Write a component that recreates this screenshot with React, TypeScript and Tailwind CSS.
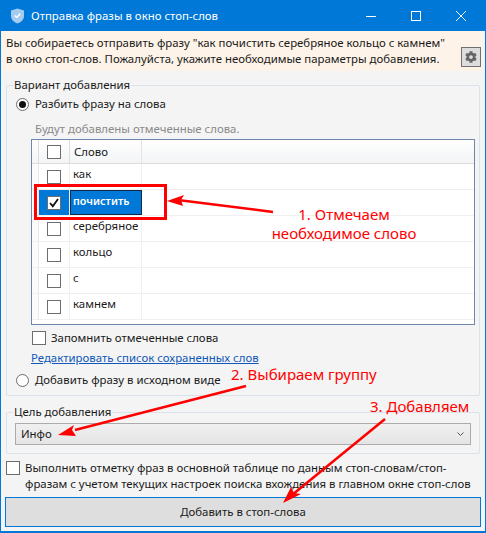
import { FaCog } from "react-icons/fa";

const WORDS = ["как", "почистить", "серебряное", "кольцо", "с", "камнем"];

function Check({ checked = false }: { checked?: boolean }) {
  return (
    <span className="flex h-[14px] w-[14px] shrink-0 items-center justify-center border border-[#6d6d6d] bg-white">
      {checked && (
        <svg width="12" height="12" viewBox="0 0 12 12">
          <path d="M2 6 L4.8 9.2 L10 2" fill="none" stroke="#111" strokeWidth="1.8" />
        </svg>
      )}
    </span>
  );
}

function Radio({ checked = false }: { checked?: boolean }) {
  return (
    <span className="flex h-[13px] w-[13px] shrink-0 items-center justify-center rounded-full border border-[#6d6d6d] bg-white">
      {checked && <span className="h-[7px] w-[7px] rounded-full bg-[#111]" />}
    </span>
  );
}

function Row({ word }: { word: string }) {
  const active = word === "почистить";
  return (
    <div className="flex h-[26px] border-b border-[#f0f0f0]">
      <div className="w-[7px] border-r border-[#e8e8e8] bg-[#fbfbfb]" />
      <div className={`flex w-[31px] items-center justify-center border-r border-[#f0f0f0] ${active ? "bg-[#0078d7]" : ""}`}>
        <Check checked={active} />
      </div>
      {active ? (
        <div className="flex w-[72px] items-center border border-[#10284a] bg-[#0078d7] pb-[4px] pl-[2px] text-[10.8px] font-semibold text-white">
          {word}
        </div>
      ) : (
        <div className="flex w-[72px] items-center border-r border-[#f0f0f0] pb-[5px] pl-[3px]">{word}</div>
      )}
    </div>
  );
}

export default function App() {
  return (
    <div className="relative flex h-[533px] w-[486px] flex-col border border-b-2 border-[#0078d7] bg-[#f4f4f4] font-['Noto_Sans',sans-serif] text-[11.4px] leading-[16px] text-[#1a1a1a]">
      {/* title bar */}
      <div className="flex h-[30px] shrink-0 items-center bg-[#0078d7] pl-[9px] text-white">
        <svg width="15" height="16" viewBox="0 0 15 16">
          <path d="M7.5 0.5 L14 2.5 V8 C14 12 10.5 14.5 7.5 15.5 C4.5 14.5 1 12 1 8 V2.5 Z" fill="#a4cbf0" />
          <path d="M4.8 7.5 L6.8 9.5 L10.2 5.8" fill="none" stroke="#fff" strokeWidth="1.5" />
        </svg>
        <span className="ml-[6px]">Отправка фразы в окно стоп-слов</span>
        <div className="ml-auto flex items-center gap-[35px] pr-[19px]">
          <svg width="10" height="10" viewBox="0 0 10 10"><path d="M0 5.5 H10" stroke="#fff" /></svg>
          <svg width="10" height="10" viewBox="0 0 10 10"><rect x="0.5" y="0.5" width="9" height="9" fill="none" stroke="#fff" /></svg>
          <svg width="10" height="10" viewBox="0 0 10 10"><path d="M0 0 L10 10 M10 0 L0 10" stroke="#fff" /></svg>
        </div>
      </div>

      {/* notice */}
      <div className="mr-[3px] flex h-[40px] shrink-0 bg-[#fef3e8] pl-[5px] pr-[1px] pt-[4px]">
        <p className="flex-1">
          Вы собираетесь отправить фразу "как почистить серебряное кольцо с камнем"
          <br />
          в окно стоп-слов. Пожалуйста, укажите необходимые параметры добавления.
        </p>
        <button className="mt-[12px] flex h-[20px] w-[20px] items-center justify-center border border-[#707070] bg-[#dddddd] text-[#666]">
          <FaCog size={12} />
        </button>
      </div>

      {/* group 1 */}
      <fieldset className="mx-[5px] mt-[6px] h-[319px] shrink-0 rounded-[2px] border border-[#dce2ea] pl-[8px] pr-[4px]">
        <legend className="-ml-[2px] px-[1px]">Вариант добавления</legend>
        <label className="flex items-center gap-[6px] pl-[1px] pt-[3px]">
          <Radio checked />
          Разбить фразу на слова
        </label>
        <p className="mt-[9px] pl-[20px] text-[#8a8a8a]">Будут добавлены отмеченные слова.</p>
        <div className="mt-[2px] ml-[16px] h-[186px] border border-[#6c89ab] bg-white">
          <div className="flex h-[24px] border-b border-[#dcdcdc] bg-gradient-to-b from-white to-[#f2f4f6]">
            <div className="w-[7px] border-r border-[#dcdcdc]" />
            <div className="flex w-[31px] items-center justify-center border-r border-[#dcdcdc]">
              <Check />
            </div>
            <div className="flex w-[72px] items-center border-r border-[#e4e4e4] pl-[4px]">Слово</div>
          </div>
          {WORDS.map((w) => (
            <Row key={w} word={w} />
          ))}
        </div>
        <label className="mt-[5px] ml-[17px] flex items-center gap-[5px]">
          <Check />
          Запомнить отмеченные слова
        </label>
        <a className="mt-[4px] ml-[16px] block text-[#0f57b8] underline">Редактировать список сохраненных слов</a>
        <label className="mt-[6px] flex items-center gap-[6px] pl-[1px]">
          <Radio />
          Добавить фразу в исходном виде
        </label>
      </fieldset>

      {/* group 2 */}
      <fieldset className="mx-[5px] mt-[8px] h-[50px] shrink-0 rounded-[2px] border border-[#dce2ea] px-[8px]">
        <legend className="-ml-[2px] px-[1px]">Цель добавления</legend>
        <div className="mt-[3px] flex h-[22px] items-center justify-between border border-[#acacac] bg-gradient-to-b from-[#f0f0f0] to-[#e5e5e5] pl-[5px] pr-[6px]">
          Инфо
          <svg width="7" height="4" viewBox="0 0 7 4"><path d="M0.5 0.5 L3.5 3.5 L6.5 0.5" fill="none" stroke="#555" /></svg>
        </div>
      </fieldset>

      <label className="mt-[6px] flex gap-[5px] pl-[5px]">
        <span className="mt-[1px]"><Check /></span>
        <span>
          Выполнить отметку фраз в основной таблице по данным стоп-словам/стоп-
          <br />
          фразам с учетом текущих настроек поиска вхождения в главном окне стоп-слов
        </span>
      </label>

      <button className="mx-[4px] mt-[5px] h-[30px] border border-[#0078d7] bg-[#dedede]">
        Добавить в стоп-слова
      </button>

      {/* annotations drawn over the window */}
      <div className="pointer-events-none absolute -left-px -top-px h-[533px] w-[486px]">
        <svg width="486" height="533" className="absolute left-0 top-0">
          <rect x="35.5" y="185.5" width="130" height="33" fill="none" stroke="#ff0000" strokeWidth="3" />
          <path d="M178 200 L273 212" stroke="#ff0000" strokeWidth="2.5" />
          <path d="M167 201 L184 195 L181 200 L183 206 Z" fill="#ff0000" />
          <path d="M75 430 L246 386" stroke="#ff0000" strokeWidth="2.5" />
          <path d="M58 435 L74 425 L72 430 L76 436 Z" fill="#ff0000" />
          <path d="M385 419 L292 495" stroke="#ff0000" strokeWidth="2.5" />
          <path d="M283 503 L291 487 L294 493 L301 494 Z" fill="#ff0000" />
        </svg>
        <p className="absolute left-[271px] top-[205px] w-[146px] whitespace-nowrap text-center text-[15px] leading-[19px] text-[#ff0000]">
          1. Отмечаем
          <br />
          необходимое слово
        </p>
        <p className="absolute left-[231px] top-[364px] whitespace-nowrap text-[15px] leading-[20px] text-[#ff0000]">2. Выбираем группу</p>
        <p className="absolute left-[370px] top-[396px] whitespace-nowrap text-[15px] leading-[20px] text-[#ff0000]">3. Добавляем</p>
      </div>
    </div>
  );
}
